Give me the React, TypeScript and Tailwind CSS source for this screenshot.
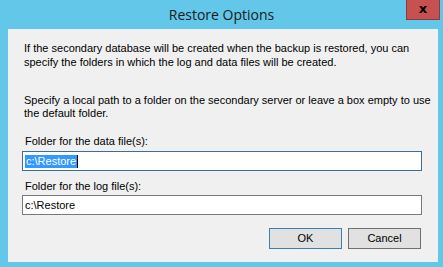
export default function App() {
  return (
    <div className="flex h-[267px] w-[443px] flex-col bg-[#63c7ea]">
      {/* title bar */}
      <div className="relative flex h-[29px] shrink-0 items-center justify-center">
        <span className="pb-[1px] font-['Open_Sans',sans-serif] text-[14px] text-[#1a1a1a]">Restore Options</span>
        <div className="absolute left-[406px] top-0 flex h-[20px] w-[34px] items-center justify-center border border-t-0 border-[#8a3c3c] bg-[#c75050]">
          <span className="mt-[-2px] font-['DejaVu_Sans',sans-serif] text-[13px] font-bold leading-none text-black">x</span>
        </div>
      </div>

      {/* client area */}
      <div className="ml-[8px] mr-[5px] flex h-[233px] flex-col whitespace-nowrap bg-[#f0f0f0] px-[14px] pt-[12px] font-['Liberation_Sans',Arial,sans-serif] text-[11px] text-black">
        <p className="pl-[2px] leading-[14px]">
          If the secondary database will be created when the backup is restored, you can
          <br />
          specify the folders in which the log and data files will be created.
        </p>
        <p className="mt-[25px] pl-[2px] leading-[13px]">
          Specify a local path to a folder on the secondary server or leave a box empty to use
          <br />
          the default folder.
        </p>

        <label className="mt-[15px] pl-[3px] leading-[13px]">Folder for the data file(s):</label>
        <div className="mt-[3px] flex h-[20px] w-[400px] items-center border border-[#3c6e9c] bg-white pl-[2px]">
          <span className="bg-[#3399ff] px-[1px] leading-[13px] text-white">c:\Restore</span>
          <span className="h-[13px] w-[1px] bg-black" />
        </div>

        <label className="mt-[9px] pl-[3px] leading-[13px]">Folder for the log file(s):</label>
        <div className="mt-[2px] flex h-[20px] w-[400px] items-center border border-[#7a7a7a] bg-white pl-[2px]">
          <span className="leading-[13px]">c:\Restore</span>
        </div>

        <div className="mt-[13px] flex w-[399px] justify-end gap-[6px]">
          <button className="flex h-[21px] w-[73px] items-center justify-center border border-[#3c7fb1] bg-[#e1e1e1]">
            OK
          </button>
          <button className="flex h-[21px] w-[73px] items-center justify-center border border-[#707070] bg-[#e1e1e1]">
            Cancel
          </button>
        </div>
      </div>
    </div>
  );
}
